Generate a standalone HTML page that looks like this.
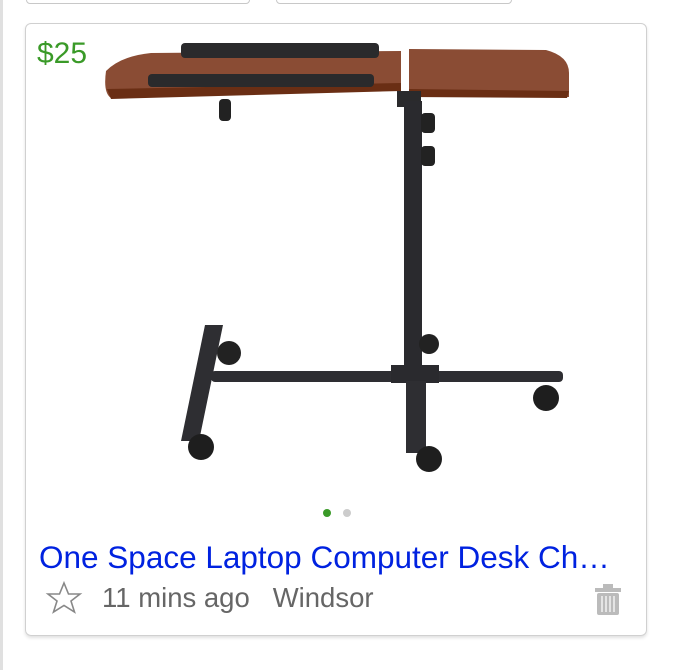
<!DOCTYPE html>
<html><head><style>
body{margin:0;width:684px;height:670px;background:#fff;position:relative;overflow:hidden;font-family:"Liberation Sans",sans-serif}
.tb{position:absolute;top:-6px;height:8px;border:1px solid #c8c8c8;border-radius:4px;background:#fff}
.card{position:absolute;left:25px;top:23px;width:620px;height:611px;border:1px solid #d0d0d0;border-radius:6px;box-shadow:0 2px 3px rgba(0,0,0,.12)}
.price{position:absolute;left:11px;top:13px;color:#3a9a28;font-size:30px}
.title{position:absolute;left:13px;top:515px;color:#0022e0;font-size:31.5px;white-space:nowrap}
.meta{position:absolute;left:76px;top:558px;color:#666;font-size:27.5px;white-space:nowrap}
</style></head><body>
<div style="position:absolute;left:0;top:0;width:3px;height:670px;background:#e0e0e0"></div>
<div class="tb" style="left:26px;width:222px"></div>
<div class="tb" style="left:276px;width:234px"></div>
<div class="card">
<svg width="620" height="611" style="position:absolute;left:0;top:0" viewBox="25 23 620 611">
<path d="M105,70 Q120,55 150,52 L400,50 L400,88 L110,97 Q102,92 105,70Z" fill="#8a4c34"/>
<path d="M106,88 L400,82 L400,90 L110,98Z" fill="#6a2e14"/>
<path d="M408,48 L545,49 Q568,55 568,72 L568,96 L408,94Z" fill="#8a4c34"/>
<path d="M408,88 L568,90 L566,97 L408,96Z" fill="#6a2e14"/>
<rect x="180" y="42" width="198" height="15" rx="4" fill="#2a2a2c"/>
<rect x="147" y="73" width="226" height="13" rx="4" fill="#2a2a2c"/>
<rect x="218" y="98" width="12" height="22" rx="4" fill="#222"/>
<rect x="396" y="90" width="24" height="16" fill="#2a2a2c"/>
<rect x="403" y="100" width="18" height="275" fill="#2a2a2e"/>
<rect x="420" y="112" width="14" height="20" rx="4" fill="#222"/>
<rect x="420" y="145" width="14" height="20" rx="4" fill="#222"/>
<circle cx="228" cy="352" r="12" fill="#222"/>
<circle cx="428" cy="343" r="10" fill="#222"/>
<rect x="210" y="370" width="352" height="11" rx="4" fill="#2e2e32"/>
<rect x="390" y="364" width="48" height="18" fill="#2a2a2e"/>
<path d="M204,324 L222,324 L198,440 L180,440Z" fill="#2e2e32"/>
<rect x="405" y="380" width="20" height="72" fill="#2e2e32"/>
<circle cx="200" cy="446" r="13" fill="#1e1e1e"/>
<circle cx="428" cy="458" r="13" fill="#1e1e1e"/>
<circle cx="545" cy="397" r="13" fill="#1e1e1e"/>
<circle cx="326" cy="512" r="4" fill="#3a9a28"/>
<circle cx="346" cy="512" r="4" fill="#ccc"/>
<path d="M63,582 L67.5,593 L79,593 L70,600 L73.5,611 L63,604.5 L52.5,611 L56,600 L47,593 L58.5,593Z" fill="none" stroke="#888" stroke-width="1.6"/>
<rect x="594" y="587" width="26" height="4" fill="#bbb"/><rect x="602" y="583" width="10" height="5" fill="#bbb"/>
<rect x="596" y="592" width="22" height="22" rx="2" fill="#bbb"/>
<path d="M601,595v16M605,595v16M609,595v16M613,595v16" stroke="#fff" stroke-width="1.2"/>
</svg>
<div class="price">$25</div>
<div class="title">One Space Laptop Computer Desk Ch…</div>
<div class="meta">11 mins ago&nbsp;&nbsp;&nbsp;Windsor</div>
</div>
</body></html>
